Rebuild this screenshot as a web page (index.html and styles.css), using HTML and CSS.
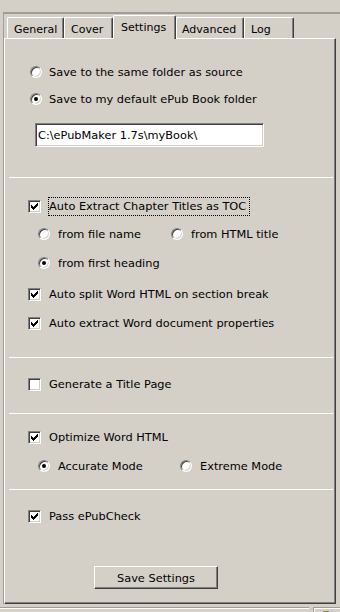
FILE: index.html
```html
<!DOCTYPE html>
<html lang="en">
<head>
  <meta charset="UTF-8">
  <title>ePubMaker Settings</title>
  <link rel="stylesheet" href="styles.css">
</head>
<body>
  <div class="frame">
    <div class="tabs">
      <div class="tab tab-general">General</div>
      <div class="tab tab-cover">Cover</div>
      <div class="tab tab-settings active">Settings</div>
      <div class="tab tab-advanced">Advanced</div>
      <div class="tab tab-log">Log</div>
    </div>

    <div class="panel">
      <div class="group group-folder">
        <div class="row">
          <span class="radio"></span>
          <span class="label">Save to the same folder as source</span>
        </div>
        <div class="row gap-7">
          <span class="radio on"></span>
          <span class="label">Save to my default ePub Book folder</span>
        </div>
        <input class="path" type="text" value="C:\ePubMaker 1.7s\myBook\">
      </div>

      <div class="group group-toc">
        <div class="row">
          <span class="check on"></span>
          <span class="label focus">Auto Extract Chapter Titles as TOC</span>
        </div>
        <div class="row sub gap-8">
          <div class="option option-file">
            <span class="radio"></span>
            <span class="label">from file name</span>
          </div>
          <div class="option">
            <span class="radio"></span>
            <span class="label">from HTML title</span>
          </div>
        </div>
        <div class="row sub gap-9">
          <div class="option">
            <span class="radio on"></span>
            <span class="label">from first heading</span>
          </div>
        </div>
        <div class="row gap-11">
          <span class="check on"></span>
          <span class="label">Auto split Word HTML on section break</span>
        </div>
        <div class="row gap-9">
          <span class="check on"></span>
          <span class="label">Auto extract Word document properties</span>
        </div>
      </div>

      <div class="group group-title">
        <div class="row">
          <span class="check"></span>
          <span class="label">Generate a Title Page</span>
        </div>
      </div>

      <div class="group group-optimize">
        <div class="row">
          <span class="check on"></span>
          <span class="label">Optimize Word HTML</span>
        </div>
        <div class="row sub gap-9">
          <div class="option option-mode">
            <span class="radio on"></span>
            <span class="label">Accurate Mode</span>
          </div>
          <div class="option">
            <span class="radio"></span>
            <span class="label">Extreme Mode</span>
          </div>
        </div>
      </div>

      <div class="group group-check">
        <div class="row">
          <span class="check on"></span>
          <span class="label">Pass ePubCheck</span>
        </div>
        <button class="save-btn">Save Settings</button>
      </div>
    </div>
  </div>

  <div class="status">
    <div class="status-main"></div>
    <div class="status-side"><span class="grip"></span></div>
  </div>
</body>
</html>
```

FILE: styles.css
```css
body {
  margin: 0;
  background-color: #d4d0c8;
  font-family: "DejaVu Sans", Tahoma, sans-serif;
  font-size: 11.35px;
  color: #000;
  width: 340px;
  height: 612px;
  overflow: hidden;
}

.frame {
  margin: 12px 0 0 3px;
  border-top: 2px solid #a09d96;
  border-left: 1px solid #a09d96;
}

/* tab strip */
.tabs {
  display: flex;
  align-items: flex-end;
  padding: 1px 0 0 3px;
  font-size: 11px;
}

.tab {
  box-sizing: border-box;
  height: 21px;
  padding: 5px 0 0 5px;
  background-color: #d4d0c8;
  border-top: 1px solid #fff;
  border-left: 1px solid #fff;
  border-right: 1px solid #404040;
  box-shadow: inset -1px 0 #808080;
  border-radius: 2px 2px 0 0;
}

.tab.active {
  position: relative;
  z-index: 1;
  height: 24px;
  margin-bottom: -1px;
  padding: 5px 0 0 7px;
}

.tab-general { width: 57px; padding-left: 6px; }
.tab-cover { width: 49px; padding-left: 6px; }
.tab-settings { width: 63px; }
.tab-advanced { width: 68px; }
.tab-log { width: 50px; padding-left: 6px; }

/* tab page */
.panel {
  box-sizing: border-box;
  width: 332px;
  height: 566px;
  border-top: 1px solid #fff;
  border-left: 1px solid #fff;
  border-right: 1px solid #404040;
  border-bottom: 1px solid #404040;
  box-shadow: inset -1px -1px #808080;
}

.group {
  margin: 0 2px 0 4px;
  border-top: 1px solid #fff;
}

.group-folder { border-top: none; padding: 23px 0 30px; }
.group-toc { padding: 18px 0 24px; }
.group-title { padding: 16px 0 19px; }
.group-optimize { padding: 13px 0 13px; }
.group-check { padding: 16px 0 0; }

.row {
  display: flex;
  align-items: center;
  height: 20px;
}

.gap-7 { margin-top: 7px; }
.gap-8 { margin-top: 8px; }
.gap-9 { margin-top: 9px; }
.gap-11 { margin-top: 11px; }

.option {
  display: flex;
  align-items: center;
}

.option-file { width: 133px; }
.option-mode { width: 142px; }

.label {
  white-space: nowrap;
  line-height: 17px;
}

.label.focus {
  border: 1px dotted #000;
  margin-left: -1px;
  padding-right: 3px;
}

/* checkbox */
.check {
  position: relative;
  box-sizing: border-box;
  width: 13px;
  height: 13px;
  margin: 0 8px 0 19px;
  background-color: #fff;
  border: 1px solid;
  border-color: #808080 #fff #fff #808080;
  box-shadow: inset 1px 1px #404040, inset -1px -1px #d4d0c8;
}

.check.on::after {
  content: "";
  position: absolute;
  left: 2px;
  top: 2px;
  width: 7px;
  height: 7px;
  background:
    linear-gradient(#000, #000) 0 2px / 1px 3px no-repeat,
    linear-gradient(#000, #000) 1px 3px / 1px 3px no-repeat,
    linear-gradient(#000, #000) 2px 4px / 1px 3px no-repeat,
    linear-gradient(#000, #000) 3px 3px / 1px 3px no-repeat,
    linear-gradient(#000, #000) 4px 2px / 1px 3px no-repeat,
    linear-gradient(#000, #000) 5px 1px / 1px 3px no-repeat,
    linear-gradient(#000, #000) 6px 0 / 1px 3px no-repeat;
}

/* radio */
.radio {
  position: relative;
  box-sizing: border-box;
  width: 12px;
  height: 12px;
  margin: 0 7px 0 21px;
  border-radius: 50%;
  background-color: #fff;
  border: 1px solid;
  border-color: #808080 #fff #fff #808080;
  box-shadow: inset 1px 1px #404040, inset -1px -1px #d4d0c8;
}

.sub .radio { margin: 0 8px 0 0; }
.sub { padding-left: 29px; }

.radio.on::after {
  content: "";
  position: absolute;
  left: 3px;
  top: 3px;
  width: 4px;
  height: 4px;
  border-radius: 50%;
  background-color: #000;
}

/* path field */
.path {
  display: block;
  box-sizing: border-box;
  width: 229px;
  height: 24px;
  margin: 14px 0 0 26px;
  padding: 0 0 0 2px;
  font-family: "DejaVu Sans", Tahoma, sans-serif;
  font-size: 11.35px;
  color: #000;
  background-color: #fff;
  border: 1px solid;
  border-color: #808080 #fff #fff #808080;
  box-shadow: inset 1px 1px #404040, inset -1px -1px #d4d0c8;
  outline: none;
}

.save-btn {
  display: block;
  box-sizing: border-box;
  width: 124px;
  height: 23px;
  margin: 40px 0 0 85px;
  padding: 0;
  font-family: "DejaVu Sans", Tahoma, sans-serif;
  font-size: 11.35px;
  color: #000;
  background-color: #d4d0c8;
  border: 1px solid;
  border-color: #fff #404040 #404040 #fff;
  box-shadow: inset -1px -1px #808080;
}

/* status bar */
.status {
  display: flex;
  margin-top: 3px;
  height: 8px;
}

.status-main {
  width: 309px;
  border-top: 1px solid #a09d96;
  box-shadow: inset 0 1px #fff;
}

.status-side {
  position: relative;
  margin-left: 4px;
  flex: 1;
  border-top: 1px solid #a09d96;
  border-left: 1px solid #a09d96;
  box-shadow: inset 1px 1px #fff;
}

.grip {
  position: absolute;
  left: 9px;
  top: 3px;
  width: 6px;
  height: 4px;
  background-color: #8c8a2a;
}
```
